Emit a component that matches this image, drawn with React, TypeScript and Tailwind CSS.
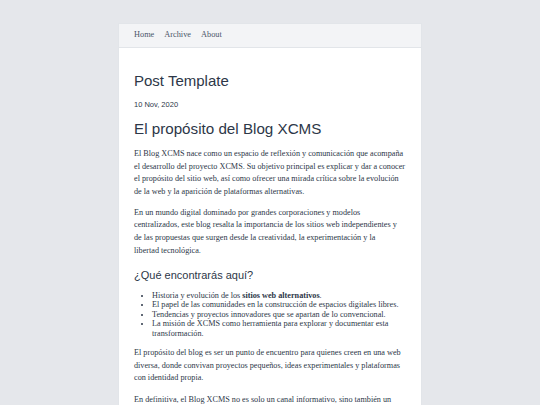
export default function App() {
  const serif = "font-['Liberation_Serif',Georgia,serif]"
  const sans = "font-['Liberation_Sans',Arial,sans-serif]"

  return (
    <div className="min-h-screen bg-[#e5e7eb] pt-[23px]">
      <div className="mx-auto w-[304px] overflow-hidden border border-[#e2e5e9] bg-white">
        <nav className={`flex h-[24px] items-center gap-[10px] border-b border-[#e2e5e9] bg-[#f3f4f6] px-[15px] text-[8.3px] text-[#4a5568] ${serif}`}>
          <a href="#">Home</a>
          <a href="#">Archive</a>
          <a href="#">About</a>
        </nav>

        <main className="px-[15px] pt-[24px] pb-6 text-[#2d3748]">
          <h1 className={`text-[15px] leading-[18px] ${sans}`}>Post Template</h1>
          <p className={`mt-[10px] text-[7.5px] leading-[9px] ${sans}`}>10 Nov, 2020</p>

          <h1 className={`mt-[11px] text-[15.2px] leading-[18px] ${sans}`}>El propósito del Blog XCMS</h1>

          <div className={`mt-[10px] text-[8.2px] leading-[12.6px] ${serif}`}>
            {/* line breaks kept as in the original layout */}
            <p className="whitespace-nowrap">
              El Blog XCMS nace como un espacio de reflexión y comunicación que acompaña<br />
              el desarrollo del proyecto XCMS. Su objetivo principal es explicar y dar a conocer<br />
              el propósito del sitio web, así como ofrecer una mirada crítica sobre la evolución<br />
              de la web y la aparición de plataformas alternativas.
            </p>
            <p className="mt-[8.5px] whitespace-nowrap">
              En un mundo digital dominado por grandes corporaciones y modelos<br />
              centralizados, este blog resalta la importancia de los sitios web independientes y<br />
              de las propuestas que surgen desde la creatividad, la experimentación y la<br />
              libertad tecnológica.
            </p>

            <h2 className={`mt-[10.5px] mb-[9px] text-[11px] leading-[14px] ${sans}`}>¿Qué encontrarás aquí?</h2>

            <ul className="list-disc pl-[18px] leading-[9.5px]">
              <li>Historia y evolución de los <strong>sitios web alternativos</strong>.</li>
              <li>El papel de las comunidades en la construcción de espacios digitales libres.</li>
              <li>Tendencias y proyectos innovadores que se apartan de lo convencional.</li>
              <li>La misión de XCMS como herramienta para explorar y documentar esta transformación.</li>
            </ul>

            <p className="mt-[9px]">
              El propósito del blog es ser un punto de encuentro para quienes creen en una web
              diversa, donde convivan proyectos pequeños, ideas experimentales y plataformas con
              identidad propia.
            </p>
            <p className="mt-[9px]">
              En definitiva, el Blog XCMS no es solo un canal informativo, sino también un espacio
              de encuentro y debate sobre el presente y el futuro de la web, invitando a cada lector
              a formar parte de esta transformación.
            </p>
          </div>
        </main>
      </div>
    </div>
  )
}
